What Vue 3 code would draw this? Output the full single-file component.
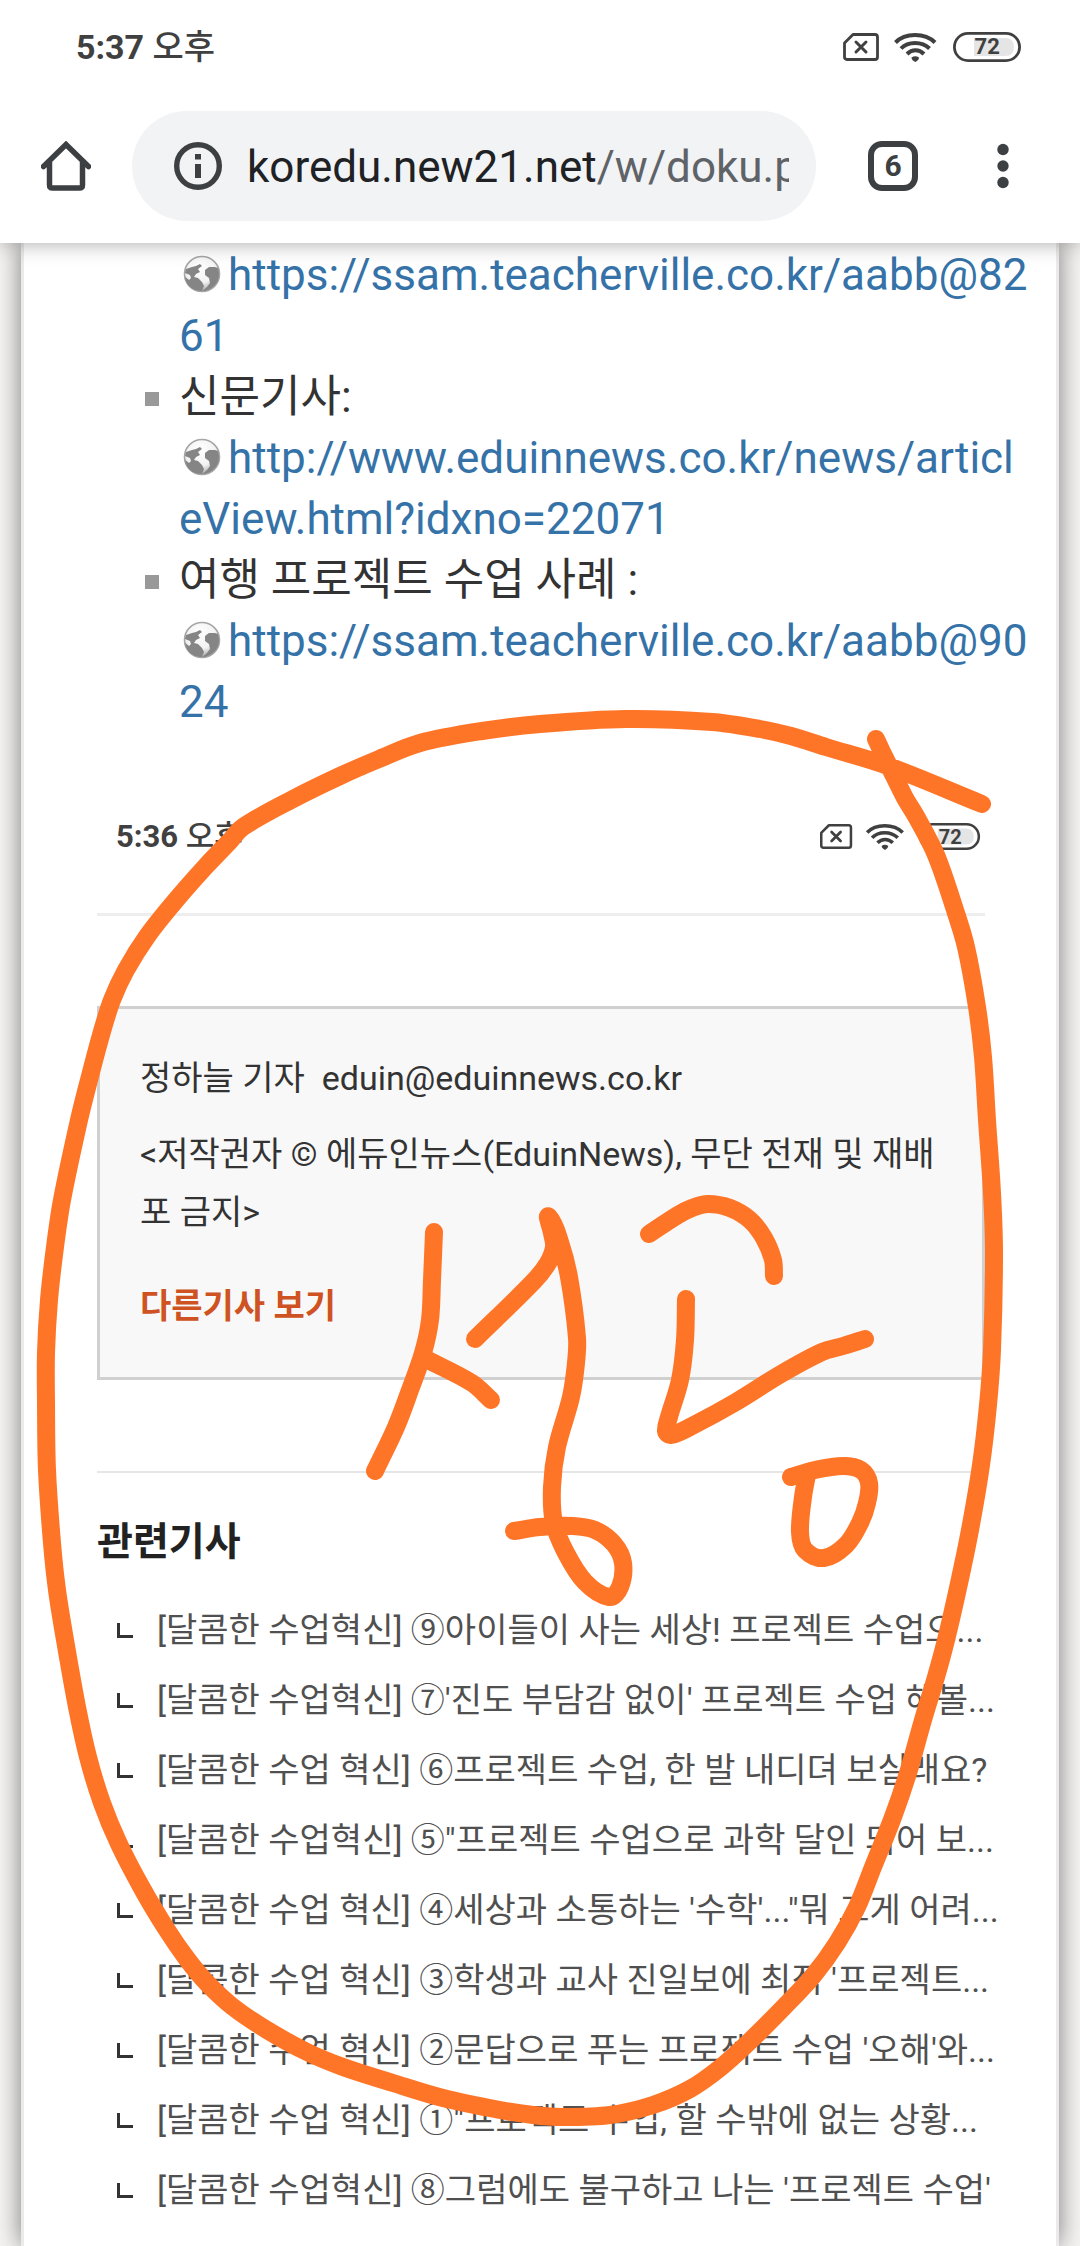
<script setup>
const address = { host: 'koredu.new21.net', path: '/w/doku.p' }

const resources = [
  { label: '', url: 'https://ssam.teacherville.co.kr/aabb@8261' },
  { label: '신문기사:', url: 'http://www.eduinnews.co.kr/news/articleView.html?idxno=22071' },
  { label: '여행 프로젝트 수업 사례 :', url: 'https://ssam.teacherville.co.kr/aabb@9024' },
]

const related = [
  "[달콤한 수업혁신] ⑨아이들이 사는 세상! 프로젝트 수업으...",
  "[달콤한 수업혁신] ⑦'진도 부담감 없이' 프로젝트 수업 해볼...",
  "[달콤한 수업 혁신] ⑥프로젝트 수업, 한 발 내디뎌 보실래요?",
  "[달콤한 수업혁신] ⑤\"프로젝트 수업으로 과학 달인 되어 보...",
  "[달콤한 수업 혁신] ④세상과 소통하는 '수학'...\"뭐 그게 어려...",
  "[달콤한 수업 혁신] ③학생과 교사 진일보에 최적 '프로젝트...",
  "[달콤한 수업 혁신] ②문답으로 푸는 프로젝트 수업 '오해'와...",
  "[달콤한 수업 혁신] ①\"프로젝트 수업, 할 수밖에 없는 상황...",
  "[달콤한 수업혁신] ⑧그럼에도 불구하고 나는 '프로젝트 수업'",
]

// Pen strokes as sampled points, joined by a smooth curve
const strokes = [
  [[982,804],[888,766],[826,747],[791,736],[760,729],[712,722],[626,719],[540,724],[482,731],[420,743],[379,759],[340,776],[293,799],[243,827],[229,842],[206,866],[176,900],[148,935],[126,970],[112,1000],[101,1035],[89,1080],[79,1120],[62,1200],[55,1247],[49,1300],[46,1353],[46,1403],[47,1470],[52,1543],[57,1590],[65,1640],[77,1707],[88,1757],[102,1803],[119,1844],[143,1890],[167,1930],[187,1959],[207,1983],[233,2007],[267,2030],[307,2052],[343,2067],[393,2083],[443,2098],[500,2110],[533,2115],[562,2117],[610,2115],[653,2105],[690,2089],[720,2068],[750,2041],[783,2008],[813,1976],[837,1943],[857,1907],[873,1867],[893,1817],[908,1773],[923,1720],[936,1677],[946,1640],[958,1588],[970,1530],[981,1465],[988,1405],[992,1350],[994,1253],[992,1193],[987,1120],[983,1057],[977,1007],[966,947],[955,910],[936,855],[917,818],[905,798],[895,778],[884,756],[876,739]],
  [[434,1232],[432,1280],[430,1320],[423,1353],[410,1390],[396,1427],[375,1471]],
  [[426,1359],[472,1383],[491,1400]],
  [[475,1339],[534,1281],[548,1263],[554,1247],[552,1233],[549,1217],[560,1242],[569,1277],[577,1338],[576,1363],[571,1397],[557,1447],[552,1487],[554,1523],[566,1553],[585,1582],[609,1597],[620,1587],[623,1563],[614,1544],[595,1530],[573,1526],[540,1527],[514,1531]],
  [[649,1234],[678,1215],[692,1208],[708,1204],[730,1208],[750,1220],[764,1238],[773,1260],[774,1276]],
  [[686,1299],[685,1340],[680,1380],[669,1417],[666,1431],[671,1435],[692,1426],[736,1402],[781,1374],[822,1352],[843,1346],[865,1339]],
  [[791,1477],[815,1470],[843,1466],[861,1470],[869,1483],[867,1503],[860,1523],[846,1545],[824,1558],[805,1550],[800,1532],[803,1497],[807,1475]],
]

function toPath(points) {
  let d = `M${points[0][0]} ${points[0][1]}`
  for (let i = 0; i < points.length - 1; i++) {
    const a = points[Math.max(i - 1, 0)]
    const b = points[i]
    const c = points[i + 1]
    const e = points[Math.min(i + 2, points.length - 1)]
    const span = Math.hypot(c[0] - b[0], c[1] - b[1])
    const scale = (p, q) => span / 3 / (Math.hypot(q[0] - p[0], q[1] - p[1]) || 1)
    const s = scale(a, c)
    const t = scale(b, e)
    d += `C${b[0] + (c[0] - a[0]) * s} ${b[1] + (c[1] - a[1]) * s} ${c[0] - (e[0] - b[0]) * t} ${c[1] - (e[1] - b[1]) * t} ${c[0]} ${c[1]}`
  }
  return d
}
const paths = strokes.map(toPath)
</script>

<template>
  <div class="screen">
    <svg class="defs" width="0" height="0" aria-hidden="true">
      <defs>
        <radialGradient id="globe-fill" cx="45%" cy="30%" r="75%">
          <stop offset="0" stop-color="#ffffff" />
          <stop offset="0.6" stop-color="#f2f2f2" />
          <stop offset="1" stop-color="#9a9a9a" />
        </radialGradient>
        <symbol id="globe" viewBox="0 0 38 38">
          <circle cx="19" cy="19" r="17.5" fill="url(#globe-fill)" stroke="#a6a6a6" stroke-width="1.6" />
          <path d="M3 14L9 12L13 11L17 9L19 11L15 14L17 17L13 19L11 22L15 23L19 27L21 31L19 36C9 36 3 30 2 22L6 25L8 23L7 20L2 18Z" fill="#858585" />
          <path d="M22 15L26 12L32 12L35 13C37 19 36 26 32 30C28 34 24 36 19 36L24 32L27 28L26 23L22 20Z" fill="#858585" />
        </symbol>
        <symbol id="indicators" viewBox="0 0 178 30">
          <path d="M10 2.5H32Q34.500 2.500 34.500 5V25Q34.500 27.500 32 27.500H4Q1.500 27.500 1.500 25V11Z" fill="none" stroke="#404040" stroke-width="2.800" stroke-linejoin="round" />
          <path d="M13 10L23 20M23 10L13 20" stroke="#404040" stroke-width="3" stroke-linecap="round" />
          <g fill="none" stroke="#404040" stroke-width="4">
            <path d="M52.500 10.500C62 0.500 82 0.500 92 10.500" />
            <path d="M58 16.500C65 9 79 9 86.500 16.500" />
            <path d="M64 22C69 17 76 17 81 22" />
          </g>
          <path d="M68.500 25.500Q72.300 23 76 25.500Q76 28 72.300 30Q68.500 28 68.500 25.500Z" fill="#404040" />
          <path d="M131 6H162Q171 6 171 15T162 24H131Z" fill="#e5e5e5" />
          <rect x="111.400" y="1.400" width="65.200" height="27.200" rx="13.600" fill="none" stroke="#404040" stroke-width="2.800" />
        </symbol>
      </defs>
    </svg>

    <header class="browser">
      <div class="status">
        <span><b>5:37</b> 오후</span>
        <span class="indicators">
          <svg aria-hidden="true"><use href="#indicators" /></svg>
          <b class="level">72</b>
        </span>
      </div>
      <div class="toolbar">
        <button class="icon" type="button" aria-label="Home">
          <svg viewBox="0 0 50 50"><path d="M2.500 25.500L25 3.500L47.500 25.500M8.500 21V44Q8.500 47 11.500 47H38.500Q41.500 47 41.500 44V21" fill="none" stroke="#3c4043" stroke-width="5.500" stroke-linecap="round" /></svg>
        </button>
        <button class="address" type="button" aria-label="Address">
          <svg viewBox="0 0 48 48" aria-hidden="true">
            <circle cx="24" cy="24" r="21.300" fill="none" stroke="#3c4043" stroke-width="5.400" />
            <path d="M21 12H27V17.500H21ZM21 22H27V36H21Z" fill="#3c4043" />
          </svg>
          <span class="url">{{ address.host }}<i>{{ address.path }}</i></span>
        </button>
        <button class="icon tabs" type="button" aria-label="Tabs">6</button>
        <button class="icon" type="button" aria-label="Menu">
          <svg viewBox="0 0 50 50" fill="#3c4043"><circle cx="25" cy="8.500" r="5.700" /><circle cx="25" cy="25" r="5.700" /><circle cx="25" cy="41.500" r="5.700" /></svg>
        </button>
      </div>
    </header>

    <main class="page">
      <ul class="resources">
        <li v-for="item in resources" :key="item.url" :class="{ marked: item.label }">
          <div v-if="item.label">{{ item.label }}</div>
          <a :href="item.url"><svg aria-hidden="true"><use href="#globe" /></svg>{{ item.url }}</a>
        </li>
      </ul>

      <section class="article">
        <div class="status small">
          <span><b>5:36</b> 오후</span>
          <span class="indicators">
            <svg aria-hidden="true"><use href="#indicators" /></svg>
            <b class="level">72</b>
          </span>
        </div>
        <div class="byline">
          <p>정하늘 기자&nbsp; eduin@eduinnews.co.kr</p>
          <p>&lt;저작권자 © 에듀인뉴스(EduinNews), 무단 전재 및 재배포 금지&gt;</p>
          <a href="#more">다른기사 보기</a>
        </div>
        <div class="related">
          <h2>관련기사</h2>
          <ul>
            <li v-for="title in related" :key="title"><a href="#article">{{ title }}</a></li>
          </ul>
        </div>
      </section>
    </main>

    <svg class="ink" viewBox="0 0 1080 2246" aria-hidden="true">
      <path v-for="(d, i) in paths" :key="i" :d="d" />
    </svg>
  </div>
</template>

<style>
body {
  margin: 0;
  background: #f6f5f3;
}
</style>

<style scoped>
.screen {
  position: relative;
  display: flex;
  flex-direction: column;
  min-height: 100vh;
  overflow: hidden;
  font-family: Roboto, "Noto Sans CJK KR", sans-serif;
  color: #333;
}
.defs {
  position: absolute;
}
ul, p, h2 {
  margin: 0;
  padding: 0;
}
ul {
  list-style: none;
}
a {
  text-decoration: none;
}
button {
  border: 0;
  padding: 0;
  background: none;
  font: inherit;
  color: #3c4043;
}
.browser {
  position: relative;
  z-index: 1;
  background: #fff;
  box-shadow: 0 0 20px rgba(0, 0, 0, 0.35);
}
.status {
  display: flex;
  align-items: center;
  justify-content: space-between;
  height: 94px;
  padding: 0 59px 0 76px;
  font-size: 34px;
  line-height: 34px;
  font-weight: 500;
  color: #404040;
}
.status b {
  font-weight: 700;
}
.indicators {
  position: relative;
  display: flex;
  width: 178px;
  height: 30px;
}
.indicators svg {
  width: 100%;
  height: 100%;
}
.level {
  position: absolute;
  inset: 0 0 0 auto;
  width: 38%;
  display: flex;
  align-items: center;
  justify-content: center;
  font-size: 22px;
}
.toolbar {
  display: flex;
  align-items: center;
  padding: 17px 52px 22px 41px;
}
.icon {
  flex: none;
  width: 50px;
  height: 50px;
}
.icon svg {
  display: block;
}
.address {
  flex: 1;
  min-width: 0;
  display: flex;
  align-items: center;
  gap: 25px;
  height: 110px;
  margin: 0 52px 0 41px;
  padding: 0 27px 0 42px;
  border-radius: 55px;
  background: #f1f3f4;
}
.address svg {
  flex: none;
  width: 48px;
  height: 48px;
}
.url {
  flex: 1;
  overflow: hidden;
  padding-top: 2px;
  white-space: nowrap;
  text-align: left;
  font-size: 44px;
  line-height: 56px;
  color: #202124;
}
.url i {
  font-style: normal;
  color: #5f6368;
}
.tabs {
  box-sizing: border-box;
  margin-right: 60px;
  border: 6px solid #3c4043;
  border-radius: 14px;
  font-size: 30px;
  font-weight: 700;
  line-height: 38px;
}
.page {
  flex: 1;
  margin: 0 21px;
  padding: 2px 71px 20px 73px;
  border: solid #ebebeb;
  border-width: 0 3px;
  background: #fff;
  box-shadow: 0 0 24px rgba(0, 0, 0, 0.5);
}
.resources {
  margin-right: -51px;
  padding: 0 0 27px 82px;
  font-size: 44px;
  line-height: 61px;
}
.resources li {
  position: relative;
}
.marked::before {
  content: "";
  position: absolute;
  top: 25px;
  left: -34px;
  width: 14px;
  height: 14px;
  background: #999;
}
.resources a {
  color: #3572a8;
  word-break: break-all;
}
.resources svg {
  width: 38px;
  height: 38px;
  margin: 0 7px 0 4px;
  vertical-align: -3px;
}
.small {
  height: 153px;
  padding: 0 4px 0 19px;
  border-bottom: 3px solid #eee;
  font-size: 31px;
}
.small .indicators {
  width: 162px;
  height: 27px;
}
.small .level {
  font-size: 20px;
}
.byline {
  margin: 90px 0 91px;
  padding: 40px 40px 42px;
  border: 3px solid #d0d0d0;
  background: #f8f8f8;
  font-size: 34px;
  line-height: 58px;
}
.byline p + p {
  margin: 18px 0 36px;
  word-break: break-all;
}
.byline a {
  display: block;
  font-weight: 700;
  color: #cf5322;
}
.related {
  padding-top: 40px;
  border-top: 2px solid #e6e6e6;
}
.related h2 {
  margin-bottom: 24px;
  font-size: 39px;
  font-weight: 700;
  line-height: 58px;
  color: #222;
}
.related li {
  display: flex;
  align-items: center;
  gap: 24px;
  padding-left: 20px;
  font-size: 34px;
  line-height: 70px;
  white-space: nowrap;
}
.related li::before {
  content: "";
  flex: none;
  width: 13px;
  height: 12px;
  border: solid #333;
  border-width: 0 0 3px 3px;
}
.related a {
  color: #505050;
}
.ink {
  position: absolute;
  z-index: 2;
  top: 0;
  left: 0;
  width: 100%;
  pointer-events: none;
  fill: none;
  stroke: #ff7527;
  stroke-width: 18px;
  stroke-linecap: round;
  stroke-linejoin: round;
}
</style>
